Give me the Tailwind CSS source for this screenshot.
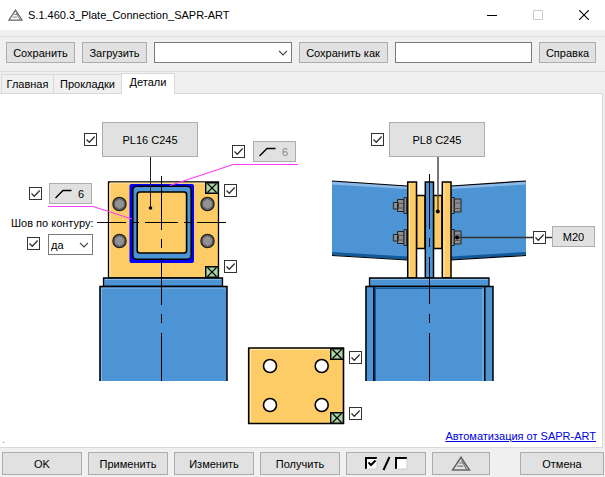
<!DOCTYPE html>
<html lang="ru">
<head>
  <meta charset="UTF-8" />
  <meta name="viewport" content="width=device-width, initial-scale=1.0"/>
  <title>S.1.460.3_Plate_Connection_SAPR-ART</title>
  <script src="https://cdn.jsdelivr.net/npm/@tailwindcss/browser@4"></script>
</head>
<body class="h-screen flex flex-col overflow-hidden bg-[#f0f0f0] text-black text-[11px] leading-4 font-['Liberation_Sans',sans-serif]">

  <!-- shared symbols -->
  <svg class="hidden">
    <symbol id="tick" viewBox="0 0 13 13"><path d="M2.5 6.5 5.3 9.3 10.7 3.5" fill="none" stroke="#333" stroke-width="1.3"/></symbol>
    <symbol id="chevron" viewBox="0 0 10 6"><path d="M1 .8 5 4.8 9 .8" fill="none" stroke="#444" stroke-width="1.2"/></symbol>
    <symbol id="weld" viewBox="0 0 17 10"><path d="M.5 9 8 1.5h8.500" fill="none" stroke="#000" stroke-width="1.4"/></symbol>
    <symbol id="logo" viewBox="0 0 18 14"><path d="M9 1.200 1.200 13h15.600z" fill="none" stroke="#666" stroke-width="1.5"/><path d="M7 6.500h4.500M5.500 9.500H11M9.500 4l5 9" fill="none" stroke="#777" stroke-width="1.100"/></symbol>
    <symbol id="cut" viewBox="0 0 14 12"><path d="M.7.7h12.600v10.600H.7z" fill="#a9d8a5" stroke="#000" stroke-width="1.4"/><path d="m2.500 1.500 9 9m0-9-9 9" stroke="#000" stroke-width="1.2"/></symbol>
    <symbol id="bolt" viewBox="0 0 16 16"><circle cx="8" cy="8" r="6.600" fill="#77777a" stroke="#222" stroke-width="1.300"/><path d="m8 2.500 4.800 2.800v5.400L8 13.500l-4.800-2.800V5.300z" fill="#929296" stroke="#444" stroke-width=".7"/></symbol>
    <symbol id="nut" viewBox="0 0 15 18"><g fill="#8e8e92" stroke="#222"><path d="M.8 6h5v6.500h-5zM5 3h6.500v12H5z"/><path d="M5 7h6.500M5 11.500h6.500" stroke="#555"/><path d="M11.500 1h2.700v16h-2.700z"/></g></symbol>
    <symbol id="head" viewBox="0 0 11 18"><g fill="#8e8e92" stroke="#222"><path d="M.5 1h2.800v16H.500zM3.300 2.500H10v13H3.300z"/><path d="M3.300 6.500H10M3.300 12H10" stroke="#555"/></g></symbol>
  </svg>

  <header class="h-[30px] shrink-0 bg-white flex items-center pl-2 pr-4">
    <svg class="w-[15px] h-3"><use href="#logo"/></svg>
    <h1 class="ml-[5px]">S.1.460.3_Plate_Connection_SAPR-ART</h1>
    <div class="ml-auto flex items-center gap-9">
      <button aria-label="Свернуть"><svg class="block w-[10px] h-[10px]"><path d="M0 5.500h10" stroke="#000"/></svg></button>
      <button aria-label="Развернуть" disabled><svg class="block w-[10px] h-[10px]"><path d="M.5.5h9v9h-9z" fill="none" stroke="#ccc"/></svg></button>
      <button aria-label="Закрыть"><svg class="block w-[10px] h-[10px]"><path d="m0 0 10 10M10 0 0 10" stroke="#000" stroke-width="1.100"/></svg></button>
    </div>
  </header>

  <div class="mt-1.5 h-9 shrink-0 border-y border-[#dcdcdc] flex items-start gap-[7px] pt-[5px] pl-1.5 pr-[9px]">
    <button class="w-[69px] h-[21px] bg-[#e1e1e1] border border-[#adadad]">Сохранить</button>
    <button class="w-[65px] h-[21px] bg-[#e1e1e1] border border-[#adadad]">Загрузить</button>
    <div class="relative flex-1 min-w-0">
      <select aria-label="Файл настроек" class="block appearance-none w-full h-[21px] bg-white border border-[#7a7a7a]"><option></option></select>
      <svg class="absolute right-1 top-2 w-[10px] h-1.5 pointer-events-none"><use href="#chevron"/></svg>
    </div>
    <button class="w-[89px] h-[21px] bg-[#e1e1e1] border border-[#adadad]">Сохранить как</button>
    <div class="flex-1 min-w-0">
      <input type="text" aria-label="Имя файла" class="block w-full h-[21px] bg-white border border-[#7a7a7a] px-1"/>
    </div>
    <button class="w-[57px] h-[21px] bg-[#e1e1e1] border border-[#adadad]">Справка</button>
  </div>

  <nav class="h-[22px] shrink-0 flex items-end pl-px -mb-px relative z-10">
    <button class="w-[53px] h-[19px] mb-px border border-b-0 border-[#d9d9d9]">Главная</button>
    <button class="w-[67px] h-[19px] mb-px border border-x-0 border-b-0 border-[#d9d9d9]">Прокладки</button>
    <button class="w-[54px] h-[21px] pb-1 bg-white border border-b-0 border-[#d9d9d9]">Детали</button>
  </nav>

  <main class="relative flex-1 min-h-0 mr-0.5 bg-white border border-l-0 border-[#d9d9d9]">
    <svg class="absolute left-0 top-0 w-[600px] h-[352px]" viewBox="0 94 600 352" fill="none">

      <!-- end plate, front view -->
      <path d="M108.500 182h110v96h-110z" fill="#fecc66" stroke="#000" stroke-width="1.300"/>
      <path d="M110 277v-94h95" stroke="#ffe6b5"/>
      <rect x="129.500" y="184" width="64.500" height="79" rx="2" fill="#00f"/>
      <rect x="132.800" y="186.200" width="58.400" height="73" rx="4" fill="#4d94d5" stroke="#000" stroke-width="1.600"/>
      <rect x="137.200" y="192" width="49.400" height="61" rx="2.500" fill="#fecc66" stroke="#000" stroke-width="1.600"/>
      <use href="#bolt" x="111.500" y="196" width="16" height="16"/>
      <use href="#bolt" x="199.500" y="196" width="16" height="16"/>
      <use href="#bolt" x="111.500" y="233" width="16" height="16"/>
      <use href="#bolt" x="199.500" y="233" width="16" height="16"/>
      <use href="#cut" x="205" y="182" width="14" height="12"/>
      <use href="#cut" x="205" y="266" width="14" height="12"/>
      <path d="M103.500 278h119v8.500h-119z" fill="#4d94d5" stroke="#000" stroke-width="1.300"/>
      <path d="M105 279.500h116" stroke="#8bb9e6"/>
      <path d="M99.500 286.500h127.500V381H99.500z" fill="#4d94d5"/>
      <path d="M101.500 381v-93h124" stroke="#8bb9e6"/>
      <path d="M100 381v-94.500h127V381" stroke="#000" stroke-width="1.500"/>
      <path d="M161.500 176v54M161.500 239v9M161.500 258v47M161.500 314v9M161.500 333v48" stroke="#000"/>
      <path d="M97 222.500h29M132 222.500h7M145 222.500h33M184 222.500h7M197 222.500h29" stroke="#000"/>
      <path d="M150.500 157v51" stroke="#222"/>
      <circle cx="150.500" cy="208" r="1.800" fill="#000"/>
      <path d="M48 206.500h45l39 12.500M298 164.500h-65l-63 21" stroke="#ff3cf5" stroke-width="1.200"/>

      <!-- joint, side view -->
      <path d="m332 181 75 5v74l-75-5zM526 181l-75 5v74l75-5z" fill="#4d94d5"/>
      <path d="m332 183 75 4.500M526 183l-75 4.500" stroke="#8bb9e6" stroke-width="3"/>
      <path d="m332 253.500 75 4.500M526 253.500l-75 4.500" stroke="#125a99" stroke-width="3"/>
      <path d="m332 181 75 5M526 181l-75 5M332 255.500l75 4.500M526 255.500l-75 4.500" stroke="#000" stroke-width="1.200"/>
      <g fill="#fecc66" stroke="#000" stroke-width="1.500">
        <path d="M416.500 195.500h8.500v53h-8.500zM433.500 195.500h8.500v53h-8.500z"/>
        <path d="M407.700 182h8.800v96h-8.800zM442.300 182h8.700v96h-8.700z"/>
        <path d="M425.300 182h8.200v96h-8.200z" fill="#4d94d5"/>
      </g>
      <path d="M409.500 277v-94M444 277v-94" stroke="#ffe6b5"/>
      <use href="#nut" x="392.500" y="196.500" width="15" height="18"/>
      <use href="#nut" x="392.500" y="228.500" width="15" height="18"/>
      <use href="#head" x="451" y="196.500" width="11" height="18"/>
      <use href="#head" x="451" y="228.500" width="11" height="18"/>
      <path d="M369.500 278H489v8.500H369.500z" fill="#4d94d5" stroke="#000" stroke-width="1.300"/>
      <path d="M371 279.500h117" stroke="#8bb9e6"/>
      <path d="M365.500 286.500H493V381H365.500z" fill="#4d94d5"/>
      <path d="M366 381v-94.500h127V381" stroke="#000" stroke-width="1.500"/>
      <path d="M376 288.500h107" stroke="#125a99"/>
      <path d="M375 287v94" stroke="#125a99" stroke-width="2"/>
      <path d="M483 288v93" stroke="#8bb9e6"/>
      <path d="M373.800 287v94M484.800 287v94" stroke="#000" stroke-width="1.500"/>
      <path d="M429.500 174v55M429.500 238v9M429.500 257v47M429.500 314v9M429.500 333v48" stroke="#000"/>
      <path d="M438 157v38" stroke="#777" stroke-width="2"/>
      <path d="M438 195v16" stroke="#5b4a28" stroke-width="1.500"/>
      <circle cx="437.800" cy="211.500" r="2" fill="#000"/>
      <path d="M457 237.500h95" stroke="#333" stroke-width="1.300"/>
      <circle cx="457" cy="237.500" r="2" fill="#000"/>

      <!-- shim plate -->
      <path d="M248.700 348h94.800v75.500h-94.800z" fill="#fecc66" stroke="#000" stroke-width="1.600"/>
      <path d="M250.500 422v-72.500h80" stroke="#ffe6b5"/>
      <g fill="#fff" stroke="#000" stroke-width="1.600">
        <circle cx="270" cy="366" r="6.500"/><circle cx="321.700" cy="366" r="6.500"/>
        <circle cx="270" cy="405" r="6.500"/><circle cx="321.700" cy="405" r="6.500"/>
      </g>
      <use href="#cut" x="330" y="348" width="14" height="12"/>
      <use href="#cut" x="330" y="412" width="14" height="12"/>
    </svg>

    <!-- controls pinned on the drawing -->
    <button class="absolute left-[102px] top-7 w-24 h-[35px] bg-[#e1e1e1] border border-[#adadad]">PL16 C245</button>
    <button class="absolute left-[389px] top-7 w-24 h-[35px] bg-[#e1e1e1] border border-[#adadad]">PL8 C245</button>
    <button class="absolute left-[253px] top-[47px] w-[43px] h-[21px] bg-[#e1e1e1] border border-[#adadad] text-[#888] flex items-center gap-1.5 pl-[5px]"><svg class="w-[17px] h-[10px]"><use href="#weld"/></svg>6</button>
    <button class="absolute left-[49px] top-[89px] w-[43px] h-[21px] bg-[#e1e1e1] border border-[#adadad] flex items-center gap-1.5 pl-[5px]"><svg class="w-[17px] h-[10px]"><use href="#weld"/></svg>6</button>
    <button class="absolute left-[552px] top-[132px] w-[43px] h-[21px] bg-[#e1e1e1] border border-[#adadad]">M20</button>

    <label for="contour" class="absolute left-[11px] top-[121px] whitespace-nowrap">Шов по контуру:</label>
    <div class="absolute left-12 top-[140px] w-[45px]">
      <select id="contour" class="block appearance-none w-full h-[21px] bg-white border border-[#7a7a7a] pl-0.5"><option>да</option><option>нет</option></select>
      <svg class="absolute right-1 top-2 w-[10px] h-1.5 pointer-events-none"><use href="#chevron"/></svg>
    </div>

    <label class="absolute left-[84px] top-[39px] size-[13px]"><input type="checkbox" checked aria-label="PL16 C245" class="peer block appearance-none size-[13px] bg-white border border-[#333]"/><svg class="absolute inset-0 size-[13px] invisible peer-checked:visible"><use href="#tick"/></svg></label>
    <label class="absolute left-[371px] top-[39px] size-[13px]"><input type="checkbox" checked aria-label="PL8 C245" class="peer block appearance-none size-[13px] bg-white border border-[#333]"/><svg class="absolute inset-0 size-[13px] invisible peer-checked:visible"><use href="#tick"/></svg></label>
    <label class="absolute left-[232px] top-[51px] size-[13px]"><input type="checkbox" checked aria-label="Верхний шов" class="peer block appearance-none size-[13px] bg-white border border-[#333]"/><svg class="absolute inset-0 size-[13px] invisible peer-checked:visible"><use href="#tick"/></svg></label>
    <label class="absolute left-[29px] top-[93px] size-[13px]"><input type="checkbox" checked aria-label="Боковой шов" class="peer block appearance-none size-[13px] bg-white border border-[#333]"/><svg class="absolute inset-0 size-[13px] invisible peer-checked:visible"><use href="#tick"/></svg></label>
    <label class="absolute left-[27px] top-[143px] size-[13px]"><input type="checkbox" checked aria-label="Шов по контуру" class="peer block appearance-none size-[13px] bg-white border border-[#333]"/><svg class="absolute inset-0 size-[13px] invisible peer-checked:visible"><use href="#tick"/></svg></label>
    <label class="absolute left-[224px] top-[90px] size-[13px]"><input type="checkbox" checked aria-label="Верхний срез пластины" class="peer block appearance-none size-[13px] bg-white border border-[#333]"/><svg class="absolute inset-0 size-[13px] invisible peer-checked:visible"><use href="#tick"/></svg></label>
    <label class="absolute left-[224px] top-[166px] size-[13px]"><input type="checkbox" checked aria-label="Нижний срез пластины" class="peer block appearance-none size-[13px] bg-white border border-[#333]"/><svg class="absolute inset-0 size-[13px] invisible peer-checked:visible"><use href="#tick"/></svg></label>
    <label class="absolute left-[533px] top-[137px] size-[13px]"><input type="checkbox" checked aria-label="M20" class="peer block appearance-none size-[13px] bg-white border border-[#333]"/><svg class="absolute inset-0 size-[13px] invisible peer-checked:visible"><use href="#tick"/></svg></label>
    <label class="absolute left-[349px] top-[257px] size-[13px]"><input type="checkbox" checked aria-label="Верхний срез прокладки" class="peer block appearance-none size-[13px] bg-white border border-[#333]"/><svg class="absolute inset-0 size-[13px] invisible peer-checked:visible"><use href="#tick"/></svg></label>
    <label class="absolute left-[349px] top-[313px] size-[13px]"><input type="checkbox" checked aria-label="Нижний срез прокладки" class="peer block appearance-none size-[13px] bg-white border border-[#333]"/><svg class="absolute inset-0 size-[13px] invisible peer-checked:visible"><use href="#tick"/></svg></label>

    <span class="absolute left-0.5 bottom-0 text-[#888]">.</span>
    <a href="#" class="absolute right-1.5 bottom-[3px] text-[#0000e6] underline">Автоматизация от SAPR-ART</a>
  </main>

  <footer class="shrink-0 flex gap-1.5 pt-1 pb-0.5 pl-0.5 pr-px">
    <button class="w-20 h-[23px] bg-[#e1e1e1] border border-[#adadad]">OK</button>
    <button class="w-20 h-[23px] bg-[#e1e1e1] border border-[#adadad]">Применить</button>
    <button class="w-20 h-[23px] bg-[#e1e1e1] border border-[#adadad]">Изменить</button>
    <button class="w-20 h-[23px] bg-[#e1e1e1] border border-[#adadad]">Получить</button>
    <button aria-label="Включить или выключить все" class="w-20 h-[23px] bg-[#e1e1e1] border border-[#adadad] flex items-center justify-center">
      <svg class="w-[43px] h-[15px]" fill="none">
        <path d="M1 2h11v11H1zM31 2h11v11H31z" fill="#fff"/>
        <path d="M1 13V2h11M31 13V2h11" stroke="#000" stroke-width="2"/>
        <path d="M1 13h11V2M31 13h11V2" stroke="#ccc"/>
        <path d="M3.500 6.500 6 9l4.500-4.500" stroke="#000" stroke-width="2"/>
        <path d="M18.500 14 24.500 1" stroke="#000" stroke-width="2"/>
      </svg>
    </button>
    <button aria-label="SAPR-ART" class="w-[58px] h-[23px] bg-[#e1e1e1] border border-[#adadad] flex items-center justify-center"><svg class="w-[20px] h-[15px]"><use href="#logo"/></svg></button>
    <button class="ml-auto w-[84px] h-[23px] bg-[#e1e1e1] border border-[#adadad]">Отмена</button>
  </footer>

</body>
</html>
